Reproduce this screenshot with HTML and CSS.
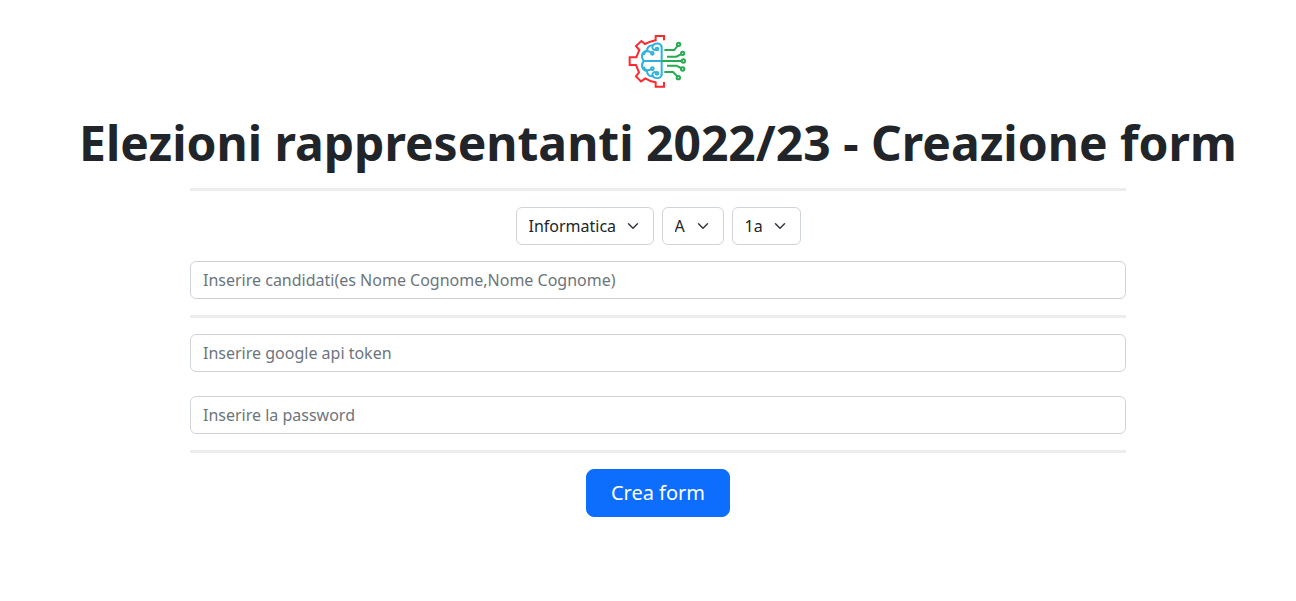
FILE: index.html
```html
<!DOCTYPE html>
<html lang="it">
<head>
<meta charset="utf-8">
<meta name="viewport" content="width=device-width, initial-scale=1">
<title>Elezioni rappresentanti - Creazione form</title>
<link rel="stylesheet" href="styles.css">
</head>
<body>
<main class="page">
  <svg class="logo" viewBox="30 24 180 162" fill="none" stroke-width="6" role="img" aria-label="Logo">
    <g stroke="#fc2a2d">
      <path d="M138 43V30H113V43L97 47L81 54L70 45L54 60L64 72L55 94H35V117H54L63 139L54 151L69 166L82 157L97 165L113 169V182H138V168"/>
    </g>
    <g stroke="#2fb1de">
      <path d="M131 64C131 48 105 50 103 64C104 71 110 73 114 71"/>
      <circle cx="117" cy="69" r="4"/>
      <path d="M131 61V148M78 105H131"/>
      <path d="M106 58C95 57 87 64 87 74C73 76 66 91 78 105C66 117 73 132 87 135C87 146 95 152 106 151"/>
      <path d="M77 87C80 76 89 72 98 79"/>
      <circle cx="103" cy="82" r="4"/>
      <path d="M77 122C80 132 89 136 98 130"/>
      <circle cx="103" cy="128" r="4"/>
      <path d="M131 145C131 161 105 159 103 146C104 139 110 137 114 139"/>
      <circle cx="117" cy="142" r="4"/>
    </g>
    <g stroke="#25ab50">
      <path d="M139 72H169L179 59M147 92H175L189 85M131 105H191M147 119H175L189 126M139 138H165L178 151"/>
      <circle cx="182" cy="55" r="5"/>
      <circle cx="194" cy="82" r="5"/>
      <circle cx="196" cy="105" r="5"/>
      <circle cx="194" cy="129" r="5"/>
      <circle cx="181" cy="155" r="5"/>
    </g>
  </svg>
  <h1 class="title">Elezioni rappresentanti 2022/23 - Creazione form</h1>
  <form class="form">
    <hr class="divider">
    <div class="selectors">
      <select class="select" aria-label="Indirizzo"><option>Informatica</option></select>
      <select class="select" aria-label="Sezione"><option>A</option><option>B</option><option>C</option><option>D</option></select>
      <select class="select" aria-label="Classe"><option>1a</option><option>2a</option><option>3a</option><option>4a</option><option>5a</option></select>
    </div>
    <input class="field" type="text" aria-label="Candidati" placeholder="Inserire candidati(es Nome Cognome,Nome Cognome)">
    <hr class="divider">
    <div class="credentials">
      <input class="field" type="text" aria-label="Google api token" placeholder="Inserire google api token">
      <input class="field" type="password" aria-label="Password" placeholder="Inserire la password">
    </div>
    <hr class="divider">
    <button class="submit" type="submit">Crea form</button>
  </form>
</main>
</body>
</html>
```
FILE: styles.css
```css
*, *::before, *::after { box-sizing: border-box; }

body {
  margin: 0;
  font: 400 16px/24px "Noto Sans", "Liberation Sans", sans-serif;
  color: #212529;
  background: #fff;
}

.page {
  display: flex;
  flex-direction: column;
  align-items: center;
  padding: 34px 0 24px 20px;
}

.logo { width: 60px; height: 54px; }

.title {
  margin: 26px 0 16px;
  font-size: 48px;
  font-weight: 700;
  line-height: 58px;
  text-align: center;
}

.form {
  display: flex;
  flex-direction: column;
  gap: 16px;
  width: 100%;
  max-width: 960px;
  padding: 0 12px;
}

.divider {
  width: 100%;
  height: 3px;
  margin: 0;
  border: 0;
  background: #ededed;
}

.selectors {
  display: flex;
  flex-wrap: wrap;
  justify-content: center;
  gap: 8px;
}

.select,
.field {
  height: 38px;
  border: 1px solid #ced4da;
  border-radius: 6px;
  padding: 6px 12px;
  font: inherit;
  color: #212529;
  background-color: #fff;
}

.select {
  appearance: none;
  padding-right: 36px;
  background-image: url("data:image/svg+xml,%3Csvg xmlns='http://www.w3.org/2000/svg' viewBox='0 0 16 16'%3E%3Cpath fill='none' stroke='%23343a40' stroke-linecap='round' stroke-linejoin='round' stroke-width='2' d='m2 5 6 6 6-6'/%3E%3C/svg%3E");
  background-repeat: no-repeat;
  background-position: right 12px center;
  background-size: 16px 12px;
}

.field { width: 100%; }

.field::placeholder { color: #6c757d; opacity: 1; }

.credentials { display: grid; gap: 24px; }

.submit {
  align-self: center;
  padding: 8px 24px;
  border: 1px solid #0d6efd;
  border-radius: 8px;
  font: inherit;
  font-size: 20px;
  line-height: 30px;
  color: #fff;
  background: #0d6efd;
  cursor: pointer;
}
```
